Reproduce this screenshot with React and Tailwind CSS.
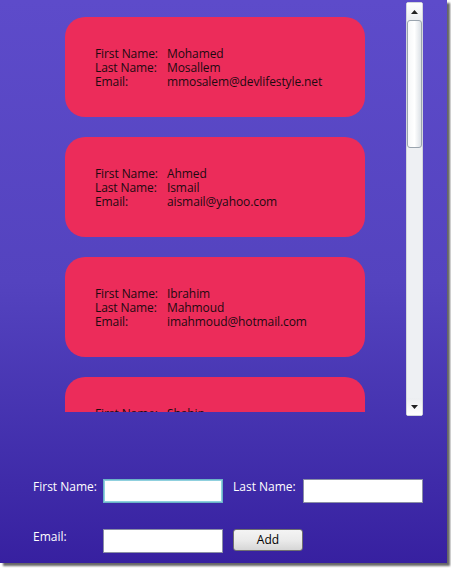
import React from 'react';

const people = [
  { first: 'Mohamed', last: 'Mosallem', email: 'mmosalem@devlifestyle.net' },
  { first: 'Ahmed', last: 'Ismail', email: 'aismail@yahoo.com' },
  { first: 'Ibrahim', last: 'Mahmoud', email: 'imahmoud@hotmail.com' },
  { first: 'Shahin', last: 'Sherif', email: 'ssherif@gmail.com' },
];

function PersonCard({ person }) {
  return (
    <div className="w-[300px] h-[100px] shrink-0 rounded-[20px] bg-[#ec2c5a] pl-[30px] pt-[2px] flex items-center text-[12px] leading-[14px] tracking-[-0.1px] text-[#1c0a10]">
      <div>
        <div className="flex">
          <span className="w-[72px]">First Name:</span>
          <span>{person.first}</span>
        </div>
        <div className="flex">
          <span className="w-[72px]">Last Name:</span>
          <span>{person.last}</span>
        </div>
        <div className="flex">
          <span className="w-[72px]">Email:</span>
          <span>{person.email}</span>
        </div>
      </div>
    </div>
  );
}

function ScrollBar() {
  return (
    <div className="mt-[2px] w-[17px] h-[414px] flex flex-col bg-[#eef0f3] border border-[#d2d6dc] rounded-[2px]">
      {/* up button */}
      <div className="h-[17px] flex items-center justify-center bg-gradient-to-b from-white to-[#eceef1]">
        <svg width="7" height="4" viewBox="0 0 7 4">
          <path d="M3.5 0 L7 4 L0 4 Z" fill="#222" />
        </svg>
      </div>
      {/* thumb */}
      <div className="h-[128px] rounded-[3px] border border-[#9aa4ae] bg-gradient-to-r from-[#f6f7f8] via-white to-[#dce1e6]" />
      <div className="flex-1" />
      {/* down button */}
      <div className="h-[17px] flex items-center justify-center bg-gradient-to-b from-[#eceef1] to-white">
        <svg width="7" height="4" viewBox="0 0 7 4">
          <path d="M0 0 L7 0 L3.5 4 Z" fill="#222" />
        </svg>
      </div>
    </div>
  );
}

export default function App() {
  return (
    <div
      className="w-[451px] h-[568px] bg-white overflow-hidden"
      style={{ fontFamily: '"Open Sans", "DejaVu Sans", sans-serif' }}
    >
      <div className="w-[447px] h-[563px] bg-gradient-to-b from-[#5d4bca] via-[#5443bf] to-[#3720a0] shadow-[3px_3px_2px_rgba(0,0,0,0.6)] flex flex-col">
        {/* List */}
        <div className="flex h-[416px]">
          <div className="w-[406px] h-[412px] overflow-hidden pt-[17px] pl-[65px] flex flex-col gap-[20px]">
            {people.map((p) => (
              <PersonCard key={p.email} person={p} />
            ))}
          </div>
          <ScrollBar />
        </div>

        {/* Form */}
        <div className="mt-[63px] pl-[33px] text-[12px] text-white">
          <div className="flex items-start h-[24px]">
            <span className="w-[70px] leading-[16px]">First Name:</span>
            <input className="w-[120px] h-[24px] bg-white border border-[#6bb3c6] outline outline-1 outline-[#8fd0de] -outline-offset-2" />
            <span className="ml-[10px] w-[70px] leading-[16px]">Last Name:</span>
            <input className="w-[120px] h-[24px] bg-white border border-[#8a8fa5]" />
          </div>
          <div className="flex items-start mt-[26px]">
            <span className="w-[70px] leading-[16px]">Email:</span>
            <input className="w-[120px] h-[24px] bg-white border border-[#8a8fa5]" />
            <button className="ml-[10px] w-[70px] h-[22px] rounded-[3px] border border-[#707070] bg-gradient-to-b from-[#f4f4f4] via-[#ebebeb] to-[#d6d6d6] text-[12px] text-black leading-none">
              Add
            </button>
          </div>
        </div>
      </div>
    </div>
  );
}
